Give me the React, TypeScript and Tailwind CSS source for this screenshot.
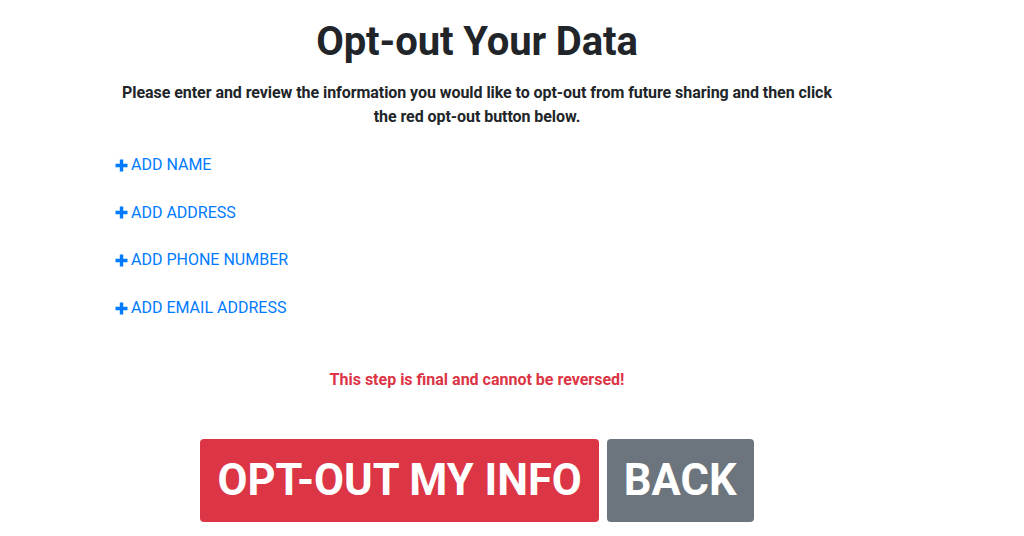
import type { ReactNode } from "react";

const fields = ["Add Name", "Add Address", "Add Phone Number", "Add Email Address"];

function PlusIcon() {
  return (
    <svg width="13" height="13" viewBox="0 0 13 13" className="shrink-0">
      <path d="M4.8 0.5h3.4v4.3h4.3v3.4H8.2v4.3H4.8V8.2H0.5V4.8h4.3z" fill="#007bff" />
    </svg>
  );
}

function BigButton({ color, children }: { color: string; children: ReactNode }) {
  return (
    <button
      type="button"
      className={`${color} h-[83px] rounded-[4px] px-[17px] text-[43.5px] font-bold leading-none text-white`}
    >
      {children}
    </button>
  );
}

export default function App() {
  return (
    <div className="min-h-[536px] bg-white font-['Roboto','Liberation_Sans',sans-serif] text-[#212529]">
      <div className="ml-[115px] flex w-[724px] flex-col pt-[18px]">
        <h1 className="text-center text-[40px] font-bold leading-[48px] tracking-[-0.1px]">Opt-out Your Data</h1>

        <p className="mt-[15px] px-1 text-center text-[16px] font-bold leading-[24px] tracking-[-0.06px]">
          Please enter and review the information you would like to opt-out from future sharing and then click
          the red opt-out button below.
        </p>

        {/* ── Field links ─────────────────────────────────────────────── */}
        <div className="mt-[24px] flex flex-col gap-[23.7px]">
          {fields.map((f) => (
            <a
              key={f}
              href="#"
              className="flex h-6 items-center gap-[3px] text-[16px] uppercase leading-6 text-[#007bff]"
            >
              <PlusIcon />
              {f}
            </a>
          ))}
        </div>

        <p className="mt-[48px] text-center text-[16px] font-bold leading-6 text-[#dc3545]">
          This step is final and cannot be reversed!
        </p>

        <div className="mt-[47px] flex justify-center gap-2">
          <BigButton color="bg-[#dc3545]">OPT-OUT MY INFO</BigButton>
          <BigButton color="bg-[#6c757d]">BACK</BigButton>
        </div>
      </div>
    </div>
  );
}
